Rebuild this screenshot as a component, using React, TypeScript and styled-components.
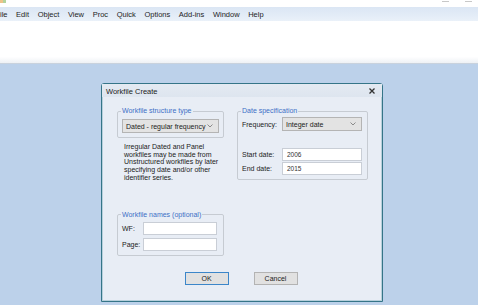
import styled, { createGlobalStyle } from 'styled-components'

const GlobalStyle = createGlobalStyle`
	html, body {
		margin: 0;
		padding: 0;
		width: 478px;
		height: 305px;
		overflow: hidden;
		background: #ffffff;
		font-family: 'Liberation Sans', Arial, sans-serif;
	}
	* {
		box-sizing: border-box;
	}
`

const menuItems = ['File', 'Edit', 'Object', 'View', 'Proc', 'Quick', 'Options', 'Add-ins', 'Window', 'Help']

const Chevron: React.FC = () => (
	<svg width="6" height="4" viewBox="0 0 6 4">
		<polyline points="0.5,0.5 3,3 5.5,0.5" fill="none" stroke="#8a8a8a" strokeWidth="1" />
	</svg>
)

const App: React.FC = () => {
	return (
		<>
			<GlobalStyle />
			<Screen>
				<TitleStrip>
					<AppIcon />
					<AppTitle>EViews</AppTitle>
					<WindowControls>
						<span />
						<span />
					</WindowControls>
				</TitleStrip>
				<MenuBar>
					{menuItems.map((item, i) => (
						<MenuItem key={item} $first={i === 0}>
							{item}
						</MenuItem>
					))}
				</MenuBar>
				<ToolArea />
				<Workspace>
					<Dialog>
						<TitleBar>
							<span>Workfile Create</span>
							<CloseBox>
								<svg width="6" height="6" viewBox="0 0 6 6">
									<path d="M0.5 0.5 L5.5 5.5 M5.5 0.5 L0.5 5.5" stroke="#333" strokeWidth="1.3" />
								</svg>
							</CloseBox>
						</TitleBar>
						<Body>
							<Columns>
								<LeftColumn>
									<Group $pad="4px 4px 4px">
										<Legend>Workfile structure type</Legend>
										<Dropdown $width={97}>
											<span>Dated - regular frequency</span>
											<Chevron />
										</Dropdown>
									</Group>
									<Note>
										Irregular Dated and Panel
										<br />
										workfiles may be made from
										<br />
										Unstructured workfiles by later
										<br />
										specifying date and/or other
										<br />
										identifier series.
									</Note>
									<NamesGroup $pad="3px 6px 4px 4px">
										<Legend>Workfile names (optional)</Legend>
										<FieldRow $labelWidth={21}>
											<Label>WF:</Label>
											<TextBox $width={74} />
										</FieldRow>
										<FieldRow $labelWidth={21} $gap={3}>
											<Label>Page:</Label>
											<TextBox $width={74} />
										</FieldRow>
									</NamesGroup>
								</LeftColumn>
								<RightColumn>
									<Group $pad="2px 5px 4px 4px">
										<Legend>Date specification</Legend>
										<FieldRow $labelWidth={40}>
											<Label>Frequency:</Label>
											<Dropdown $width={80}>
												<span>Integer date</span>
												<Chevron />
											</Dropdown>
										</FieldRow>
										<FieldRow $labelWidth={40} $gap={17}>
											<Label>Start date:</Label>
											<TextBox $width={80}>2006</TextBox>
										</FieldRow>
										<FieldRow $labelWidth={40} $gap={1}>
											<Label>End date:</Label>
											<TextBox $width={80}>2015</TextBox>
										</FieldRow>
									</Group>
								</RightColumn>
							</Columns>
							<ButtonRow>
								<Button $default>OK</Button>
								<Button>Cancel</Button>
							</ButtonRow>
						</Body>
					</Dialog>
				</Workspace>
			</Screen>
		</>
	)
}

export default App

const Screen = styled.div`
	width: 478px;
	height: 305px;
	display: flex;
	flex-direction: column;
	overflow: hidden;
`
const TitleStrip = styled.div`
	height: 7px;
	display: flex;
	align-items: flex-end;
	overflow: hidden;
	background: #ffffff;
	position: relative;
`
const AppIcon = styled.div`
	width: 6px;
	height: 8px;
	margin-top: -5px;
	align-self: flex-start;
	background: linear-gradient(90deg, #e39a3c 0 50%, #7fb55a 50% 100%);
	opacity: 0.6;
`
const AppTitle = styled.span`
	align-self: flex-start;
	margin: -6px 0 0 5px;
	font-size: 8px;
	line-height: 8px;
	color: #b0b0b0;
`
const WindowControls = styled.div`
	margin-left: auto;
	align-self: flex-start;
	display: flex;
	gap: 16px;
	padding-right: 6px;

	span {
		display: block;
		width: 7px;
		height: 1px;
		margin-top: 1px;
		background: #c8c8c8;
	}
`
const MenuBar = styled.div`
	height: 14px;
	display: flex;
	align-items: center;
	gap: 8.6px;
	background: linear-gradient(180deg, #dbe6f4 0%, #e3ecf7 60%, #eaf1f9 100%);
	font-size: 7.5px;
	color: #1e1e1e;
	white-space: nowrap;
`
const MenuItem = styled.span<{ $first?: boolean }>`
	margin-left: ${(p) => (p.$first ? '-4.6px' : '0')};
`
const ToolArea = styled.div`
	height: 43px;
	background: linear-gradient(180deg, #ffffff 0%, #ffffff 85%, #eef1f5 100%);
	border-bottom: 1px solid #c9d2dd;
`
const Workspace = styled.div`
	flex: 1;
	background: #bcd1ea;
	padding: 19px 0 0 101px;
`
const Dialog = styled.div`
	width: 282px;
	height: 219px;
	display: flex;
	flex-direction: column;
	background: #e8edf5;
	border: 1px solid #357588;
	border-radius: 3px 3px 0 0;
	box-shadow: inset 0 0 0 1px #b7d0dc;
	font-size: 7px;
	color: #1a1a1a;
`
const TitleBar = styled.div`
	height: 13px;
	display: flex;
	align-items: center;
	justify-content: space-between;
	padding: 1px 7px 0 4px;
	background: linear-gradient(180deg, #e4eaf2 0%, #dde5ef 100%);
	font-size: 7.5px;
	color: #222;
`
const CloseBox = styled.span`
	display: flex;
	align-items: center;
`
const Body = styled.div`
	flex: 1;
	display: flex;
	flex-direction: column;
	padding: 10px 0 0 15px;
`
const Columns = styled.div`
	display: flex;
	gap: 13px;
`
const LeftColumn = styled.div`
	width: 107px;
	display: flex;
	flex-direction: column;
`
const RightColumn = styled.div`
	width: 131px;
	display: flex;
	flex-direction: column;
`
const Group = styled.fieldset<{ $pad: string }>`
	margin: 0;
	padding: ${(p) => p.$pad};
	border: 1px solid #c6cbd2;
	border-radius: 2px;
	min-width: 0;
`
const NamesGroup = styled(Group)`
	margin-top: 29px;
`
const Legend = styled.legend`
	padding: 0 1px;
	margin-left: -1px;
	font-size: 7px;
	line-height: 8px;
	color: #3d6fc6;
`
const Dropdown = styled.div<{ $width: number }>`
	width: ${(p) => p.$width}px;
	height: 14px;
	display: flex;
	align-items: center;
	justify-content: space-between;
	padding: 0 5px 0 3px;
	background: #e3e3e3;
	border: 1px solid #b4b4b4;
	font-size: 7px;
	color: #222;
	white-space: nowrap;
`
const Note = styled.p`
	margin: 5px 0 0 7px;
	font-size: 7px;
	line-height: 7.7px;
	color: #222;
`
const FieldRow = styled.div<{ $labelWidth: number; $gap?: number }>`
	display: grid;
	grid-template-columns: ${(p) => p.$labelWidth}px auto;
	align-items: center;
	margin-top: ${(p) => p.$gap ?? 0}px;
`
const Label = styled.span`
	font-size: 7px;
	color: #222;
	white-space: nowrap;
`
const TextBox = styled.div<{ $width: number }>`
	width: ${(p) => p.$width}px;
	height: 13px;
	padding: 0 4px;
	display: flex;
	align-items: center;
	background: #ffffff;
	border: 1px solid #c9ced6;
	font-size: 6.5px;
	color: #333;
`
const ButtonRow = styled.div`
	display: flex;
	justify-content: center;
	gap: 25px;
	margin-top: 16px;
	padding-right: 17px;
`
const Button = styled.div<{ $default?: boolean }>`
	width: 44px;
	height: 13px;
	display: flex;
	align-items: center;
	justify-content: center;
	background: #e1e1e1;
	border: 1px solid ${(p) => (p.$default ? '#3c86c9' : '#b3b3b3')};
	font-size: 7px;
	color: #222;
`
